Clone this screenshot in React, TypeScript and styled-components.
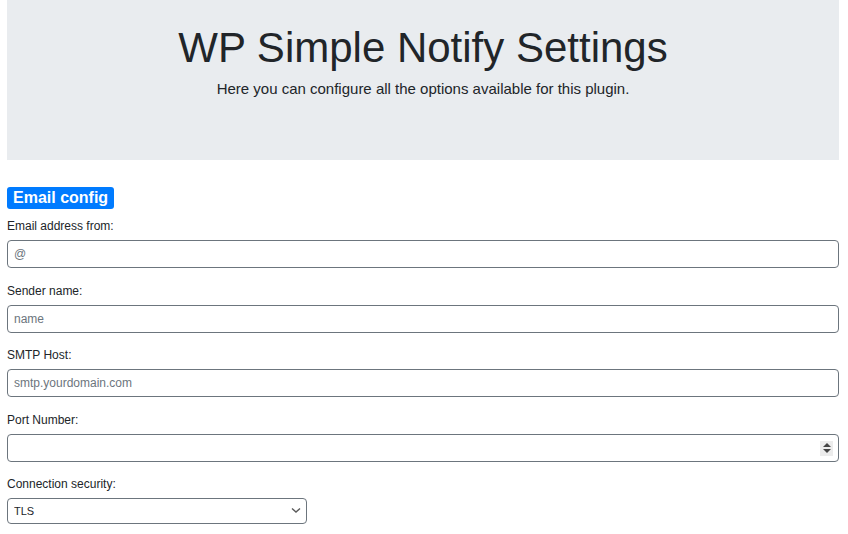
import React from 'react';
import styled, { createGlobalStyle } from 'styled-components';

const GlobalStyle = createGlobalStyle`
  body {
    margin: 0;
    background: #fff;
    color: #212529;
    font-family: "Liberation Sans", Arial, sans-serif;
  }
`;

const Page = styled.div`
  padding: 0 9px 0 7px;
`;

const Jumbotron = styled.div`
  background: #e9ecef;
  height: 160px;
  box-sizing: border-box;
  padding-top: 23px;
  text-align: center;
`;

const Title = styled.h1`
  margin: 0;
  font-size: 42px;
  font-weight: 300;
  line-height: 50px;
`;

const Lead = styled.p`
  margin: 6px 0 0;
  font-size: 15px;
  line-height: 20px;
`;

const Section = styled.div`
  padding-top: 27px;
`;

const Badge = styled.span`
  display: inline-block;
  background: #007bff;
  color: #fff;
  font-weight: 700;
  font-size: 16px;
  line-height: 22px;
  padding: 0 6px;
  border-radius: 3px;
`;

const Field = styled.div`
  margin-top: 8px;
  margin-bottom: 13.5px;
`;

const Label = styled.label`
  display: block;
  font-size: 12px;
  line-height: 18px;
  margin-bottom: 5px;
`;

const InputWrap = styled.div<{ $width?: string }>`
  position: relative;
  width: ${(p) => p.$width || '100%'};
`;

const Input = styled.input`
  display: block;
  width: 100%;
  box-sizing: border-box;
  height: 28px;
  padding: 0 6px;
  border: 1px solid #6c757d;
  border-radius: 4px;
  font-family: "Liberation Sans", Arial, sans-serif;
  font-size: 12px;
  color: #495057;
  background: #fff;
  &::placeholder {
    color: #6c757d;
  }
  &::-webkit-inner-spin-button {
    display: none;
  }
`;

const Spinner = styled.span`
  position: absolute;
  right: 6px;
  top: 7px;
  width: 13px;
  height: 15px;
  background: #ececec;
  display: flex;
  flex-direction: column;
  align-items: center;
  justify-content: center;
  gap: 2px;
  pointer-events: none;
`;

const Arrow = styled.span<{ $down?: boolean }>`
  width: 0;
  height: 0;
  border-left: 4px solid transparent;
  border-right: 4px solid transparent;
  ${(p) => (p.$down ? 'border-top: 4px solid #444;' : 'border-bottom: 4px solid #444;')}
`;

const Select = styled.select`
  display: block;
  width: 100%;
  height: 26px;
  box-sizing: border-box;
  padding: 0 24px 0 6px;
  border: 1px solid #6c757d;
  border-radius: 4px;
  appearance: none;
  font-family: "Liberation Sans", Arial, sans-serif;
  font-size: 11px;
  color: #212529;
  background: #fff;
`;

const Chevron = styled.svg`
  position: absolute;
  right: 6px;
  top: 9px;
  pointer-events: none;
`;

const fields = [
  { label: 'Email address from:', placeholder: '@', type: 'text' },
  { label: 'Sender name:', placeholder: 'name', type: 'text' },
  { label: 'SMTP Host:', placeholder: 'smtp.yourdomain.com', type: 'text' },
  { label: 'Port Number:', placeholder: '', type: 'number' },
];

export default function App() {
  return (
    <Page>
      <GlobalStyle />
      <Jumbotron>
        <Title>WP Simple Notify Settings</Title>
        <Lead>Here you can configure all the options available for this plugin.</Lead>
      </Jumbotron>
      <Section>
        <Badge>Email config</Badge>
        {fields.map((f) => (
          <Field key={f.label}>
            <Label>{f.label}</Label>
            <InputWrap>
              <Input type={f.type} placeholder={f.placeholder} />
              {f.type === 'number' && (
                <Spinner>
                  <Arrow />
                  <Arrow $down />
                </Spinner>
              )}
            </InputWrap>
          </Field>
        ))}
        <Field>
          <Label>Connection security:</Label>
          <InputWrap $width="300px">
            <Select defaultValue="TLS">
              <option>TLS</option>
              <option>SSL</option>
              <option>None</option>
            </Select>
            <Chevron width="10" height="7" viewBox="0 0 10 7">
              <path d="M1 1.5 L5 5 L9 1.5" fill="none" stroke="#5a5a5a" strokeWidth="1.4" />
            </Chevron>
          </InputWrap>
        </Field>
      </Section>
    </Page>
  );
}
